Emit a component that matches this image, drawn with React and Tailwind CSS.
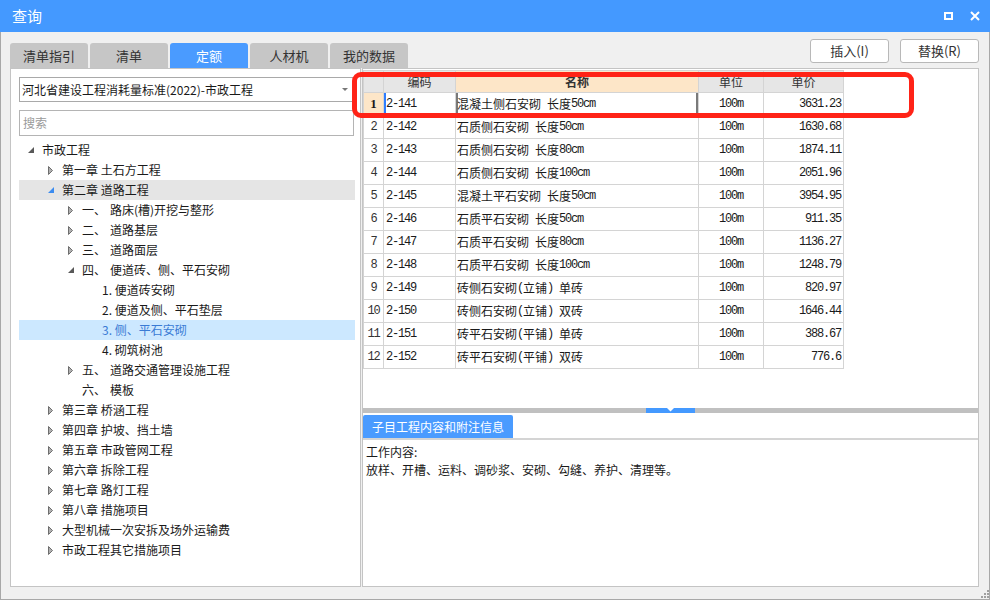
import React from "react";

const MONO = "font-['Liberation_Mono',monospace] tracking-[-1.2px] whitespace-pre";

const tabs = [
  { t: "清单指引" },
  { t: "清单" },
  { t: "定额", active: true },
  { t: "人材机" },
  { t: "我的数据" },
];

const tree = [
  { lv: 0, st: "open", label: "市政工程" },
  { lv: 1, st: "closed", label: "第一章 土石方工程" },
  { lv: 1, st: "open", label: "第二章 道路工程", hover: true },
  { lv: 2, st: "closed", pre: "一、", label: "路床(槽)开挖与整形" },
  { lv: 2, st: "closed", pre: "二、", label: "道路基层" },
  { lv: 2, st: "closed", pre: "三、", label: "道路面层" },
  { lv: 2, st: "open", pre: "四、", label: "便道砖、侧、平石安砌" },
  { lv: 3, st: "leaf", label: "1. 便道砖安砌" },
  { lv: 3, st: "leaf", label: "2. 便道及侧、平石垫层" },
  { lv: 3, st: "leaf", label: "3. 侧、平石安砌", sel: true },
  { lv: 3, st: "leaf", label: "4. 砌筑树池" },
  { lv: 2, st: "closed", pre: "五、", label: "道路交通管理设施工程" },
  { lv: 2, st: "leaf", pre: "六、", label: "模板" },
  { lv: 1, st: "closed", label: "第三章 桥涵工程" },
  { lv: 1, st: "closed", label: "第四章 护坡、挡土墙" },
  { lv: 1, st: "closed", label: "第五章 市政管网工程" },
  { lv: 1, st: "closed", label: "第六章 拆除工程" },
  { lv: 1, st: "closed", label: "第七章 路灯工程" },
  { lv: 1, st: "closed", label: "第八章 措施项目" },
  { lv: 1, st: "closed", label: "大型机械一次安拆及场外运输费" },
  { lv: 1, st: "closed", label: "市政工程其它措施项目" },
];

const indents = ["w-0", "w-[20px]", "w-[40px]", "w-[60px]"];

const rows = [
  ["2-141", "混凝土侧石安砌 长度50cm", "100m", "3631.23"],
  ["2-142", "石质侧石安砌 长度50cm", "100m", "1630.68"],
  ["2-143", "石质侧石安砌 长度80cm", "100m", "1874.11"],
  ["2-144", "石质侧石安砌 长度100cm", "100m", "2051.96"],
  ["2-145", "混凝土平石安砌 长度50cm", "100m", "3954.95"],
  ["2-146", "石质平石安砌 长度50cm", "100m", "911.35"],
  ["2-147", "石质平石安砌 长度80cm", "100m", "1136.27"],
  ["2-148", "石质平石安砌 长度100cm", "100m", "1248.79"],
  ["2-149", "砖侧石安砌(立铺) 单砖", "100m", "820.97"],
  ["2-150", "砖侧石安砌(立铺) 双砖", "100m", "1646.44"],
  ["2-151", "砖平石安砌(平铺) 单砖", "100m", "388.67"],
  ["2-152", "砖平石安砌(平铺) 双砖", "100m", "776.6"],
];

function Name({ s }) {
  const parts = s.split(/([\x20-\x7e]+)/).filter(Boolean);
  return parts.map((p, i) =>
    /[\x20-\x7e]/.test(p[0]) ? (
      <span key={i} className={MONO}>
        {p}
      </span>
    ) : (
      <span key={i}>{p}</span>
    )
  );
}

function Arrow({ st, blue }) {
  if (st === "open")
    return (
      <svg width="6" height="6" viewBox="0 0 6 6">
        <path d="M6 0 L6 6 L0 6 Z" fill={blue ? "#3b8cf0" : "#595959"} />
      </svg>
    );
  if (st === "closed")
    return (
      <svg width="5" height="9" viewBox="0 0 5 9">
        <path d="M0.5 0.5 L4.5 4.5 L0.5 8.5 Z" fill="#b0b0b0" stroke="#6e6e6e" strokeWidth="1" />
      </svg>
    );
  return null;
}

function TreeRow({ n }) {
  const bg = n.sel ? "bg-[#cce8ff]" : n.hover ? "bg-[#e5e5e5]" : "";
  const color = n.sel ? "text-[#3a7bd5]" : "text-[#1a1a1a]";
  return (
    <div className={`h-[20px] flex items-center ${bg} ${color}`}>
      <div className={`${indents[n.lv]} shrink-0`} />
      <div className="w-[23px] shrink-0 flex items-center justify-center">
        <Arrow st={n.st} blue={n.hover} />
      </div>
      <div className="whitespace-nowrap">
        {n.pre && <span className="inline-block w-[28px]">{n.pre}</span>}
        {n.label}
      </div>
    </div>
  );
}

const C = "border-r border-b border-[#d4d4d4] flex items-center shrink-0";

export default function App() {
  return (
    <div className="relative w-[990px] h-[600px] flex flex-col bg-[#f0f0f0] text-[12px] text-[#1a1a1a] font-['Noto_Sans_CJK_SC',sans-serif]">
      {/* title bar */}
      <div className="h-[32px] shrink-0 bg-[#4499ff] flex items-center pl-[12px] pr-[10px] text-white">
        <span className="text-[15px]">查询</span>
        <div className="ml-auto flex items-center gap-[17px]">
          <svg width="9" height="8" viewBox="0 0 9 8">
            <rect x="1" y="1" width="7" height="6" fill="none" stroke="white" strokeWidth="2" />
          </svg>
          <svg width="10" height="10" viewBox="0 0 10 10">
            <path d="M1 1L9 9M9 1L1 9" stroke="white" strokeWidth="2" />
          </svg>
        </div>
      </div>

      {/* body */}
      <div className="flex-1 flex flex-col border-x border-b border-[#a8a8a8] pl-[9px] pr-[10px] pb-[12px]">
        {/* tabs row */}
        <div className="h-[36px] shrink-0 flex items-end justify-between">
          <div className="flex gap-[2px]">
            {tabs.map((t) => (
              <div
                key={t.t}
                className={`w-[78px] h-[25px] rounded-t-[3px] flex items-center justify-center text-[13px] ${
                  t.active ? "bg-[#4a9bff] text-white" : "bg-[#c6c6c6] text-[#333]"
                }`}
              >
                {t.t}
              </div>
            ))}
          </div>
          <div className="self-start mt-[7px] flex gap-[11px]">
            <div className="w-[79px] h-[24px] bg-white border border-[#b8b8b8] rounded-[3px] flex items-center justify-center text-[13px] text-[#333]">
              插入(I)
            </div>
            <div className="w-[79px] h-[24px] bg-white border border-[#b8b8b8] rounded-[3px] flex items-center justify-center text-[13px] text-[#333]">
              替换(R)
            </div>
          </div>
        </div>

        {/* panels */}
        <div className="flex-1 flex gap-[1px] min-h-0">
          {/* left panel */}
          <div className="w-[351px] shrink-0 bg-white border border-[#c4c4c4] pl-[8px] pr-[5px] pt-[8px] flex flex-col">
            <div className="w-[335px] h-[25px] border border-[#a9a9a9] flex items-center pl-[2px] pr-[5px]">
              <span className="whitespace-nowrap">河北省建设工程消耗量标准(2022)-市政工程</span>
              <svg className="ml-auto" width="6" height="4" viewBox="0 0 6 4">
                <path d="M0 0 L6 0 L3 3 Z" fill="#777" />
              </svg>
            </div>
            <div className="w-[335px] h-[26px] mt-[8px] border border-[#b4b4b4] flex items-center pl-[3px] text-[#9a9a9a]">
              搜索
            </div>
            <div className="mt-[4px] flex flex-col">
              {tree.map((n, i) => (
                <TreeRow key={i} n={n} />
              ))}
            </div>
          </div>

          {/* right panel */}
          <div className="flex-1 bg-white border border-[#c4c4c4] flex flex-col min-w-0">
            <div className="h-[339px] shrink-0 pt-[1px]">
              <div className="w-[481px] border-l border-t border-[#d4d4d4]">
                {/* header */}
                <div className="flex h-[22px] text-[#333]">
                  <div className={`${C} w-[20px] bg-[#e6e6e6]`} />
                  <div className={`${C} w-[72px] bg-[#e6e6e6] justify-center`}>编码</div>
                  <div className={`${C} w-[243px] bg-[#fde6c8] justify-center font-bold`}>名称</div>
                  <div className={`${C} w-[65px] bg-[#e6e6e6] justify-center`}>单位</div>
                  <div className={`${C} w-[80px] bg-[#e6e6e6] justify-center`}>单价</div>
                </div>
                {rows.map((r, i) => {
                  const first = i === 0;
                  return (
                    <div key={r[0]} className="flex h-[23px]">
                      <div
                        className={`${C} w-[20px] justify-center ${
                          first
                            ? "bg-[#fde6c8] font-bold font-['Liberation_Serif',serif] text-[13px]"
                            : "font-['Liberation_Mono',monospace] tracking-[-1.2px] text-[#333]"
                        }`}
                      >
                        {i + 1}
                      </div>
                      <div
                        className={`${C} w-[72px] pl-[2px] ${first ? "shadow-[inset_2px_0_0_#2d7dff]" : ""}`}
                      >
                        <span className={MONO}>{r[0]}</span>
                      </div>
                      <div
                        className={`${C} w-[243px] pl-[1px] whitespace-nowrap ${
                          first ? "shadow-[inset_2px_0_0_#7a7a7a,inset_-2px_0_0_#7a7a7a]" : ""
                        }`}
                      >
                        <Name s={r[1]} />
                      </div>
                      <div className={`${C} w-[65px] justify-center`}>
                        <span className={MONO}>{r[2]}</span>
                      </div>
                      <div className={`${C} w-[80px] justify-end pr-[2px]`}>
                        <span className={MONO}>{r[3]}</span>
                      </div>
                    </div>
                  );
                })}
              </div>
            </div>

            {/* splitter */}
            <div className="h-[5px] shrink-0 bg-[#c0c0c0] flex justify-center">
              <div className="w-[49px] h-[5px] bg-[#4499ff] flex items-start justify-center">
                <svg width="7" height="4" viewBox="0 0 7 4">
                  <path d="M0 0 L7 0 L3.5 3.5 Z" fill="white" />
                </svg>
              </div>
            </div>

            <div className="h-[2px] shrink-0" />
            <div className="flex shrink-0">
              <div className="w-[150px] h-[23px] bg-[#4a9bff] text-white rounded-t-[2px] flex items-center justify-center">
                子目工程内容和附注信息
              </div>
            </div>
            <div className="flex-1 border-t-2 border-[#d4d4d4] px-[3px] pt-[3px] leading-[18px]">
              <div>工作内容:</div>
              <div>放样、开槽、运料、调砂浆、安砌、勾缝、养护、清理等。</div>
            </div>
          </div>
        </div>
      </div>

      {/* resize grip */}
      <svg className="absolute right-[1px] bottom-[2px]" width="9" height="9" viewBox="0 0 9 9">
        <rect x="7" y="1" width="2" height="2" fill="#a0a0a0" />
        <rect x="4" y="4" width="2" height="2" fill="#a0a0a0" />
        <rect x="7" y="4" width="2" height="2" fill="#a0a0a0" />
        <rect x="1" y="7" width="2" height="2" fill="#a0a0a0" />
        <rect x="4" y="7" width="2" height="2" fill="#a0a0a0" />
        <rect x="7" y="7" width="2" height="2" fill="#a0a0a0" />
      </svg>

      {/* red highlight box */}
      <div className="absolute left-[352px] top-[72px] w-[562px] h-[46px] border-[5px] border-[#ff2317] rounded-[9px] pointer-events-none" />
    </div>
  );
}
